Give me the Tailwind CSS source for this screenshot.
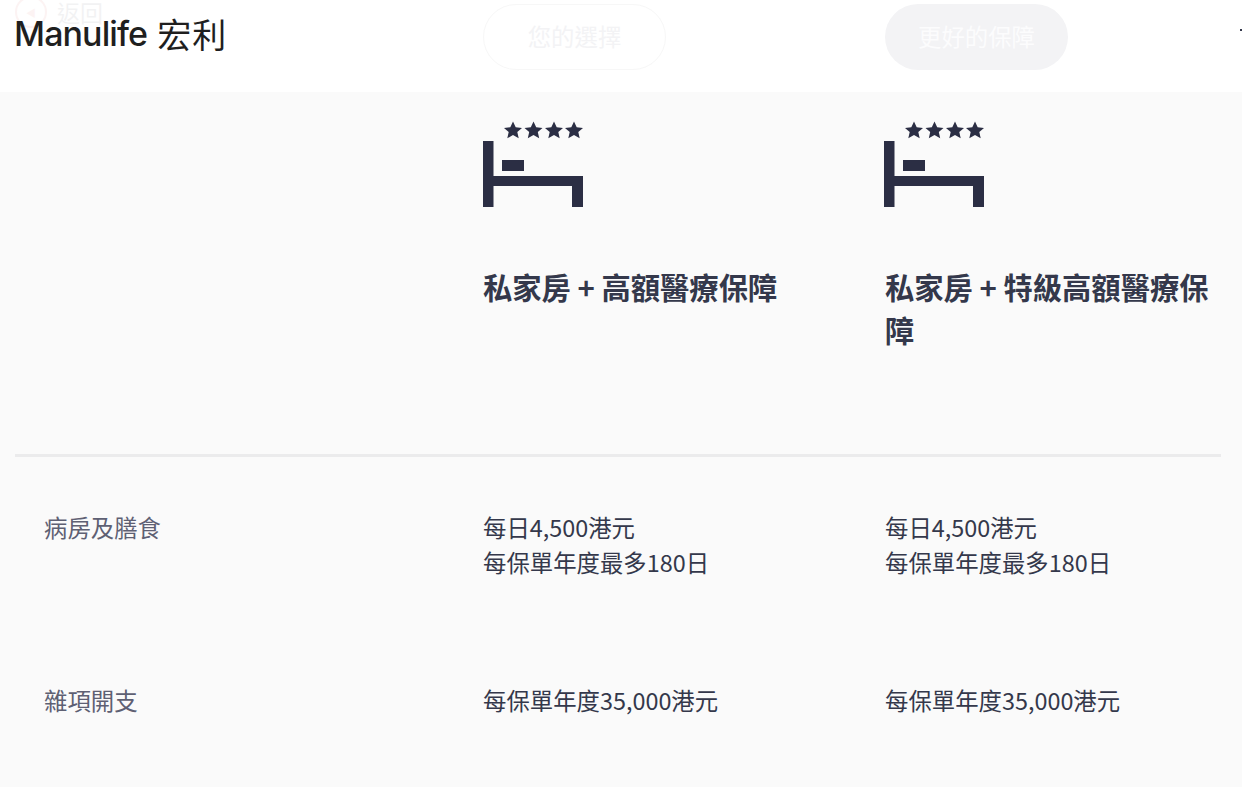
<!DOCTYPE html>
<html lang="zh-Hant">
<head>
<meta charset="utf-8">
<title>Manulife 宏利</title>
<script src="https://cdn.jsdelivr.net/npm/@tailwindcss/browser@4"></script>
</head>
<body class="bg-[#fafafa] font-['Noto_Sans_CJK_TC','Noto_Sans',sans-serif] overflow-hidden">
<div class="w-[1242px] h-[787px] overflow-hidden">

  <header class="relative h-[92px] bg-white">
    <div class="absolute left-[15px] top-[-4px] flex items-center gap-[10px] opacity-[0.06]">
      <span class="w-[32px] h-[32px] rounded-full border-2 border-[#d9443f] flex items-center justify-center text-[#d9443f] text-[10px]">◀</span>
      <span class="text-[23px] leading-[32px] text-[#34384b]">返回</span>
    </div>
    <div class="absolute left-[14px] top-[14px] flex items-center gap-[10px] text-[#1f1f1f]">
      <span class="font-['Inter',sans-serif] font-medium text-[34px] leading-[40px] tracking-[-0.9px]">Manulife</span>
      <span class="font-normal text-[34px] leading-[40px] tracking-[1px]">宏利</span>
    </div>
    <div class="absolute left-[483px] top-[4px] w-[183px] h-[66px] rounded-full border border-[#f7f7f7] flex items-center justify-center text-[23.400px] text-[#f3f3f5]">您的選擇</div>
    <div class="absolute left-[885px] top-[4px] w-[183px] h-[66px] rounded-full bg-[#f3f3f5] flex items-center justify-center text-[23.400px] text-[#fcfcfd]">更好的保障</div>
    <div class="absolute left-[1240px] top-[29px] w-[2px] h-[2px] bg-[#34384b]"></div>
  </header>

  <main class="pl-[15px] pr-[21px]">
    <!-- Plan headings -->
    <section class="h-[365px] border-b-[3px] border-[#ebebec] grid grid-cols-[468px_401px_1fr]">
      <div></div>
      <div class="pt-[29px]">
        <svg width="100" height="86" viewBox="0 0 100 86" fill="#2b2e44" class="block">
          <path d="M30 .5l2.700 5.800 6.300.6-4.700 4.200 1.400 6.200-5.700-3.300-5.700 3.300 1.400-6.200-4.700-4.200 6.300-.6z"/>
          <path d="M50.500 .5l2.700 5.800 6.300.6-4.700 4.200 1.400 6.200-5.700-3.300-5.700 3.300 1.400-6.200-4.700-4.200 6.300-.6z"/>
          <path d="M71 .5l2.700 5.800 6.300.6-4.700 4.200 1.400 6.200-5.700-3.300-5.700 3.300 1.400-6.200-4.700-4.200 6.300-.6z"/>
          <path d="M91 .5l2.700 5.800 6.300.6-4.700 4.200 1.400 6.200-5.700-3.300-5.700 3.300 1.400-6.200-4.700-4.200 6.300-.6z"/>
          <path d="M0 20h10.500v35h89.500v31h-11v-21h-78.500v21h-10.500z"/>
          <rect x="19" y="39" width="22" height="11"/>
        </svg>
        <h2 class="mt-[58px] text-[29.300px] leading-[43px] font-bold text-[#34384b]">私家房 + 高額醫療保障</h2>
      </div>
      <div class="pt-[29px]">
        <svg width="100" height="86" viewBox="0 0 100 86" fill="#2b2e44" class="block">
          <path d="M30 .5l2.700 5.800 6.300.6-4.700 4.200 1.400 6.200-5.700-3.300-5.700 3.300 1.400-6.200-4.700-4.200 6.300-.6z"/>
          <path d="M50.500 .5l2.700 5.800 6.300.6-4.700 4.200 1.400 6.200-5.700-3.300-5.700 3.300 1.400-6.200-4.700-4.200 6.300-.6z"/>
          <path d="M71 .5l2.700 5.800 6.300.6-4.700 4.200 1.400 6.200-5.700-3.300-5.700 3.300 1.400-6.200-4.700-4.200 6.300-.6z"/>
          <path d="M91 .5l2.700 5.800 6.300.6-4.700 4.200 1.400 6.200-5.700-3.300-5.700 3.300 1.400-6.200-4.700-4.200 6.300-.6z"/>
          <path d="M0 20h10.500v35h89.500v31h-11v-21h-78.500v21h-10.500z"/>
          <rect x="19" y="39" width="22" height="11"/>
        </svg>
        <h2 class="mt-[58px] ml-[1px] text-[29.300px] leading-[43px] font-bold text-[#34384b] w-[330px]">私家房 + 特級高額醫療保障</h2>
      </div>
    </section>

    <!-- Benefit rows -->
    <section class="grid grid-cols-[468px_402px_1fr] pt-[53px] text-[23.400px] leading-[35px] text-[#34384b]">
      <div class="pl-[29px] text-[#5e6073]">病房及膳食</div>
      <div>每日4,500港元<br>每保單年度最多180日</div>
      <div>每日4,500港元<br>每保單年度最多180日</div>
    </section>
    <section class="grid grid-cols-[468px_402px_1fr] pt-[103px] text-[23.400px] leading-[35px] text-[#34384b]">
      <div class="pl-[29px] text-[#5e6073]">雜項開支</div>
      <div>每保單年度35,000港元</div>
      <div>每保單年度35,000港元</div>
    </section>
  </main>
</div>
</body>
</html>
